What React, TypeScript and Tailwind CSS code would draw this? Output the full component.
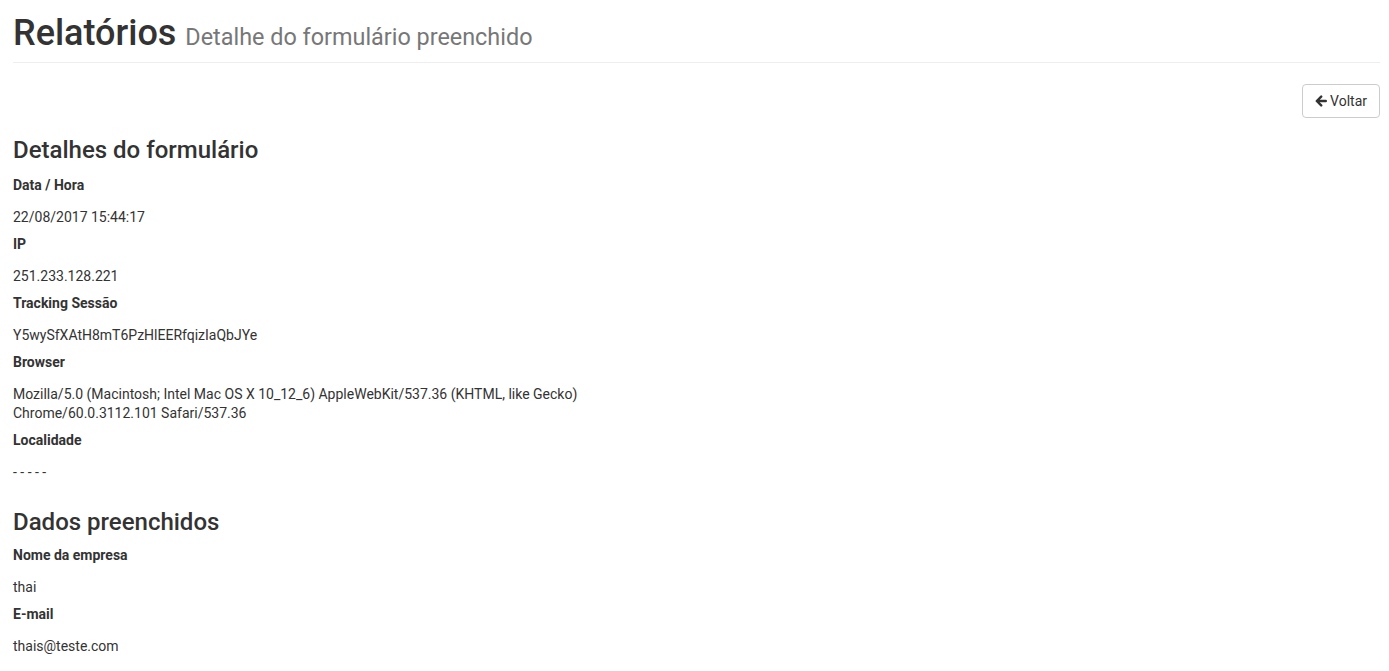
type Field = { label: string; value: string[] };

const detalhes: Field[] = [
  { label: 'Data / Hora', value: ['22/08/2017 15:44:17'] },
  { label: 'IP', value: ['251.233.128.221'] },
  { label: 'Tracking Sessão', value: ['Y5wySfXAtH8mT6PzHlEERfqizIaQbJYe'] },
  {
    label: 'Browser',
    value: [
      'Mozilla/5.0 (Macintosh; Intel Mac OS X 10_12_6) AppleWebKit/537.36 (KHTML, like Gecko)',
      'Chrome/60.0.3112.101 Safari/537.36',
    ],
  },
  { label: 'Localidade', value: ['- - - - -'] },
];

const dados: Field[] = [
  { label: 'Nome da empresa', value: ['thai'] },
  { label: 'E-mail', value: ['thais@teste.com'] },
];

function ArrowLeft() {
  return (
    <svg viewBox="0 0 12 12" className="w-[12px] h-[12px]" fill="none" stroke="currentColor">
      <path d="M10.8 6H2.2M6.2 1.6L1.8 6l4.4 4.4" strokeWidth="2.4" strokeLinecap="round" strokeLinejoin="round" />
    </svg>
  );
}

function FieldList({ fields }: { fields: Field[] }) {
  return (
    <div>
      {fields.map((f) => (
        <div key={f.label} className="pb-[8.5px]">
          <div className="text-[14px] font-bold leading-[19px] mb-[12.5px]">{f.label}</div>
          <div className="text-[14px] leading-[19px]">
            {f.value.map((line) => (
              <div key={line}>{line}</div>
            ))}
          </div>
        </div>
      ))}
    </div>
  );
}

export default function App() {
  return (
    <div
      className="min-h-screen bg-white text-[#333] pl-[13px] pr-[9px] pt-[13px]"
      style={{ fontFamily: 'Roboto, "Liberation Sans", sans-serif' }}
    >
      <div className="border-b border-[#eee] pb-[9px]">
        <h1 className="text-[36px] font-medium leading-[40px]">
          Relatórios{' '}
          <span className="text-[23.4px] font-normal leading-none text-[#777]">Detalhe do formulário preenchido</span>
        </h1>
      </div>

      <div className="flex justify-end mt-[21px]">
        <button className="h-[34px] px-[12px] border border-[#ccc] rounded-[4px] bg-white text-[14px] text-[#333] flex items-center gap-[3px]">
          <ArrowLeft />
          Voltar
        </button>
      </div>

      <h3 className="text-[24px] font-medium leading-[26px] mt-[19px] mb-[13px]">Detalhes do formulário</h3>
      <FieldList fields={detalhes} />

      <h3 className="text-[24px] font-medium leading-[26px] mt-[19px] mb-[11px]">Dados preenchidos</h3>
      <FieldList fields={dados} />
    </div>
  );
}
